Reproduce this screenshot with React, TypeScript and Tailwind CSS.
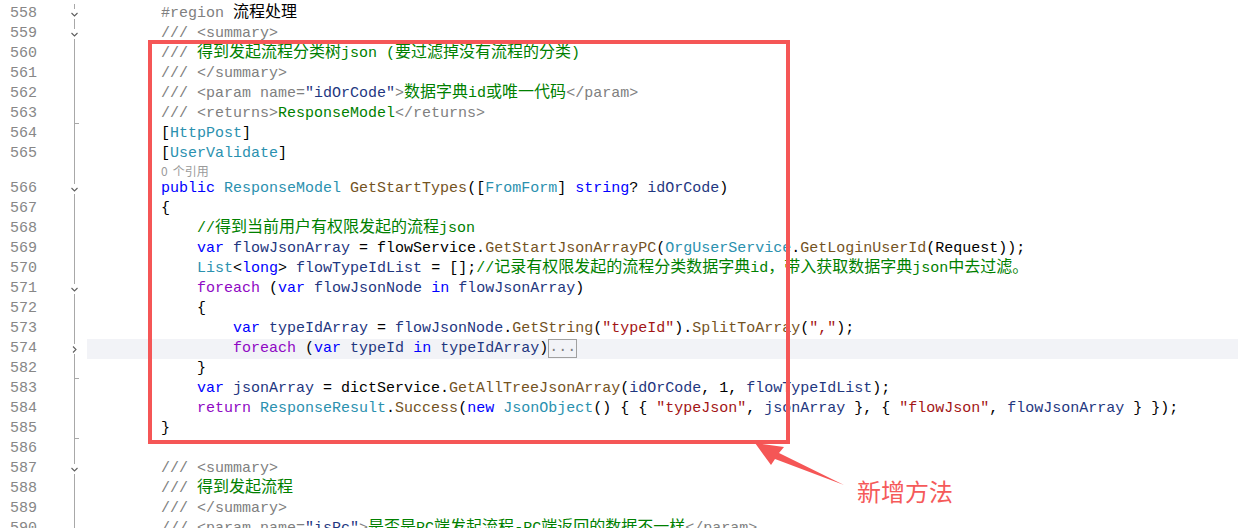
import React from "react";

type Tok = [string, string];
type Line = {
  n?: number;
  toks?: Tok[];
  fold?: "down" | "right";
  tick?: boolean;
  hl?: boolean;
  lens?: boolean;
  collapsed?: boolean;
};

const COL: Record<string, string> = {
  g: "text-[#808080]",
  c: "text-[#008000]",
  b: "text-[#0000ff]",
  p: "text-[#8f08c4]",
  t: "text-[#2b91af]",
  m: "text-[#74531f]",
  v: "text-[#1f377f]",
  s: "text-[#a31515]",
  k: "text-black",
};

const I8 = "        ";
const I12 = "            ";
const I16 = "                ";

const lines: Line[] = [
  { n: 558, fold: "down", toks: [["k", I8], ["g", "#region"], ["k", " 流程处理"]] },
  { n: 559, fold: "down", toks: [["k", I8], ["g", "/// <summary>"]] },
  { n: 560, toks: [["k", I8], ["g", "/// "], ["c", "得到发起流程分类树json (要过滤掉没有流程的分类)"]] },
  { n: 561, toks: [["k", I8], ["g", "/// </summary>"]] },
  {
    n: 562,
    toks: [["k", I8], ["g", "/// <param name="], ["v", "\"idOrCode\""], ["g", ">"], ["c", "数据字典id或唯一代码"], ["g", "</param>"]],
  },
  { n: 563, tick: true, toks: [["k", I8], ["g", "/// <returns>"], ["c", "ResponseModel"], ["g", "</returns>"]] },
  { n: 564, toks: [["k", I8 + "["], ["t", "HttpPost"], ["k", "]"]] },
  { n: 565, toks: [["k", I8 + "["], ["t", "UserValidate"], ["k", "]"]] },
  { lens: true },
  {
    n: 566,
    fold: "down",
    toks: [
      ["k", I8], ["b", "public"], ["k", " "], ["t", "ResponseModel"], ["k", " "], ["m", "GetStartTypes"], ["k", "(["],
      ["t", "FromForm"], ["k", "] "], ["b", "string"], ["k", "? "], ["v", "idOrCode"], ["k", ")"],
    ],
  },
  { n: 567, toks: [["k", I8 + "{"]] },
  { n: 568, toks: [["k", I12], ["c", "//得到当前用户有权限发起的流程json"]] },
  {
    n: 569,
    toks: [
      ["k", I12], ["b", "var"], ["k", " "], ["v", "flowJsonArray"], ["k", " = flowService."], ["m", "GetStartJsonArrayPC"], ["k", "("],
      ["t", "OrgUserService"], ["k", "."], ["m", "GetLoginUserId"], ["k", "(Request));"],
    ],
  },
  {
    n: 570,
    toks: [
      ["k", I12], ["t", "List"], ["k", "<"], ["b", "long"], ["k", "> "], ["v", "flowTypeIdList"], ["k", " = [];"],
      ["c", "//记录有权限发起的流程分类数据字典id，带入获取数据字典json中去过滤。"],
    ],
  },
  {
    n: 571,
    fold: "down",
    toks: [
      ["k", I12], ["p", "foreach"], ["k", " ("], ["b", "var"], ["k", " "], ["v", "flowJsonNode"], ["k", " "], ["b", "in"], ["k", " "],
      ["v", "flowJsonArray"], ["k", ")"],
    ],
  },
  { n: 572, toks: [["k", I12 + "{"]] },
  {
    n: 573,
    toks: [
      ["k", I16], ["b", "var"], ["k", " "], ["v", "typeIdArray"], ["k", " = "], ["v", "flowJsonNode"], ["k", "."], ["m", "GetString"], ["k", "("],
      ["s", "\"typeId\""], ["k", ")."], ["m", "SplitToArray"], ["k", "("], ["s", "\",\""], ["k", ");"],
    ],
  },
  {
    n: 574,
    fold: "right",
    hl: true,
    collapsed: true,
    toks: [
      ["k", I16], ["p", "foreach"], ["k", " ("], ["b", "var"], ["k", " "], ["v", "typeId"], ["k", " "], ["b", "in"], ["k", " "],
      ["v", "typeIdArray"], ["k", ")"],
    ],
  },
  { n: 582, tick: true, toks: [["k", I12 + "}"]] },
  {
    n: 583,
    toks: [
      ["k", I12], ["b", "var"], ["k", " "], ["v", "jsonArray"], ["k", " = dictService."], ["m", "GetAllTreeJsonArray"], ["k", "("],
      ["v", "idOrCode"], ["k", ", 1, "], ["v", "flowTypeIdList"], ["k", ");"],
    ],
  },
  {
    n: 584,
    toks: [
      ["k", I12], ["p", "return"], ["k", " "], ["t", "ResponseResult"], ["k", "."], ["m", "Success"], ["k", "("], ["b", "new"], ["k", " "],
      ["t", "JsonObject"], ["k", "() { { "], ["s", "\"typeJson\""], ["k", ", "], ["v", "jsonArray"], ["k", " }, { "], ["s", "\"flowJson\""],
      ["k", ", "], ["v", "flowJsonArray"], ["k", " } });"],
    ],
  },
  { n: 585, tick: true, toks: [["k", I8 + "}"]] },
  { n: 586, toks: [] },
  { n: 587, fold: "down", toks: [["k", I8], ["g", "/// <summary>"]] },
  { n: 588, toks: [["k", I8], ["g", "/// "], ["c", "得到发起流程"]] },
  { n: 589, toks: [["k", I8], ["g", "/// </summary>"]] },
  {
    n: 590,
    toks: [["k", I8], ["g", "/// <param name="], ["v", "\"isPc\""], ["g", ">"], ["c", "是否是PC端发起流程-PC端返回的数据不一样"], ["g", "</param>"]],
  },
];

const CJK = /([\u3000-\u303f\u4e00-\u9fff\uff00-\uffef]+)/;

function renderText(s: string, key: string) {
  const parts = s.split(CJK);
  return parts.map((p, i) =>
    /[\u3000-\u303f\u4e00-\u9fff\uff00-\uffef]/.test(p) ? (
      <span key={key + i} className="text-[16px] leading-[12px] [font-family:'Noto_Sans_CJK_SC',sans-serif]">
        {p}
      </span>
    ) : (
      <React.Fragment key={key + i}>{p}</React.Fragment>
    )
  );
}

function Chevron({ dir }: { dir: "down" | "right" }) {
  return (
    <span className="absolute left-0 right-0 top-[5px] h-[10px] bg-white flex items-center justify-center">
      <svg width="9" height="9" viewBox="0 0 9 9" className="ml-[-1px]">
        {dir === "down" ? (
          <polyline points="1.5,3 4.5,6 7.5,3" fill="none" stroke="#5f5f5f" strokeWidth="1.1" />
        ) : (
          <polyline points="3,1.5 6,4.5 3,7.5" fill="none" stroke="#5f5f5f" strokeWidth="1.1" />
        )}
      </svg>
    </span>
  );
}

function Gutter({ line, h }: { line: Line; h: string }) {
  return (
    <div className={`relative w-[18px] ${h} flex`}>
      <div className="ml-[8px] h-full border-l border-[#a8a8a8] flex flex-col justify-end">
        {line.tick && <div className="w-[4px] h-px bg-[#a8a8a8]" />}
      </div>
      {line.fold && <Chevron dir={line.fold} />}
    </div>
  );
}

function Row({ line }: { line: Line }) {
  if (line.lens) {
    return (
      <div className="flex h-[15px]">
        <div className="w-[37px]" />
        <div className="w-[29px]" />
        <Gutter line={line} h="h-[15px]" />
        <div className="w-[3px]" />
        <div className="flex-1 pl-[74px] flex text-[12px] leading-[14px] text-[#9a9a9a] [font-family:'Noto_Sans_CJK_SC','Noto_Sans',sans-serif]">
          <span>0</span>
          <span className="ml-[5px]">个引用</span>
        </div>
      </div>
    );
  }
  return (
    <div className="flex h-[20px] leading-[20px]">
      <div className="w-[37px] text-right text-[#878787]">{line.n}</div>
      <div className="w-[29px]" />
      <Gutter line={line} h="h-[20px]" />
      <div className="w-[3px]" />
      <div className={`flex-1 pl-[2px] whitespace-pre flex items-start ${line.hl ? "bg-[#f2f3f7]" : ""}`}>
        <span>
          {(line.toks || []).map((t, i) => (
            <span key={i} className={COL[t[0]]}>
              {renderText(t[1], `${line.n}-${i}-`)}
            </span>
          ))}
        </span>
        {line.collapsed && (
          <span className="h-[19px] w-[29px] border border-[#a0a0a0] text-[#808080] leading-[15px] flex justify-center">...</span>
        )}
      </div>
    </div>
  );
}

export default function App() {
  return (
    <div className="relative w-[1238px] h-[528px] overflow-hidden bg-white text-[15px] [font-family:'Liberation_Mono','Noto_Sans_CJK_SC',monospace]">
      <div className="pt-[4px] flex flex-col">
        {lines.map((l, i) => (
          <Row key={i} line={l} />
        ))}
      </div>

      <div className="absolute left-[148px] top-[40px] w-[642px] h-[404px] border-4 border-[#f55656]" />

      <svg className="absolute left-0 top-0 pointer-events-none" width="1238" height="528" viewBox="0 0 1238 528">
        <polygon points="755,443 784,447 779,453 844,485 775,459 771,465" fill="#f55656" />
      </svg>

      <div className="absolute left-[857px] top-[477px] text-[24px] leading-[28px] text-[#f55a5a] [font-family:'Noto_Sans_CJK_SC',sans-serif]">
        新增方法
      </div>
    </div>
  );
}
